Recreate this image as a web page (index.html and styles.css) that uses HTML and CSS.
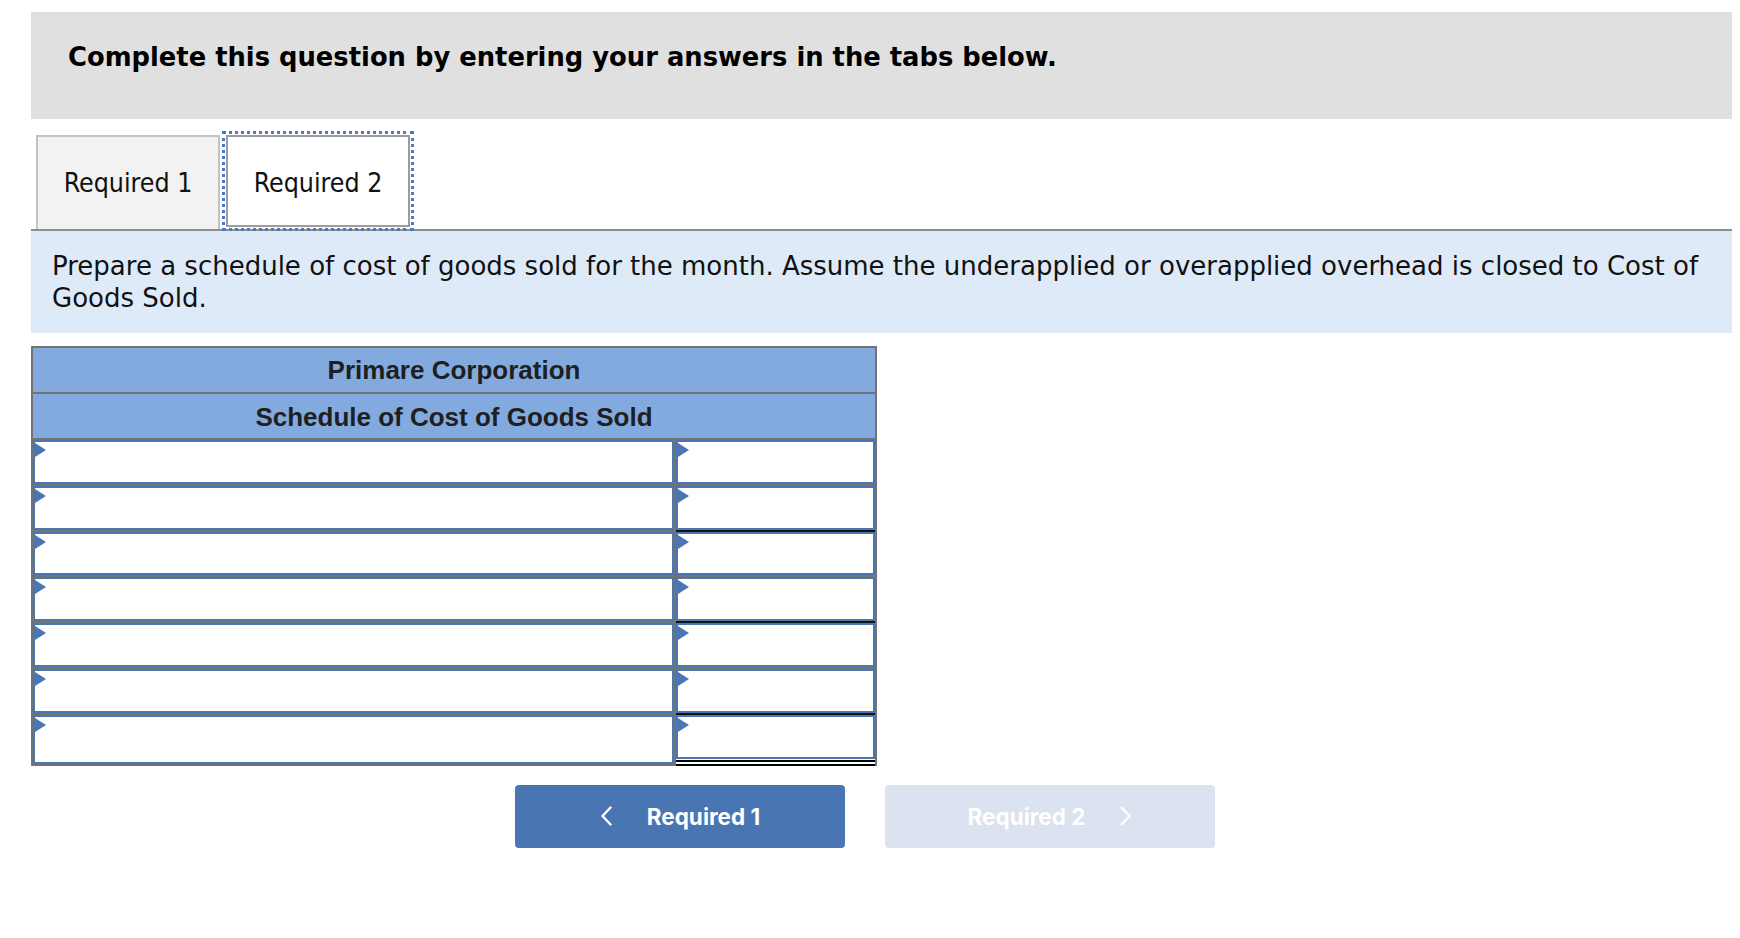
FILE: index.html
```html
<!DOCTYPE html>
<html lang="en">
<head>
<meta charset="utf-8">
<title>Required 2</title>
<link rel="stylesheet" href="styles.css">
</head>
<body>
<div class="page">
  <div class="banner">Complete this question by entering your answers in the tabs below.</div>

  <div class="tabs">
    <div class="tab">Required 1</div>
    <div class="tab active">Required 2</div>
  </div>

  <div class="panel">Prepare a schedule of cost of goods sold for the month. Assume the underapplied or overapplied overhead is closed to Cost of Goods Sold.</div>

  <div class="sheet">
    <div class="head">Primare Corporation</div>
    <div class="head">Schedule of Cost of Goods Sold</div>

    <div class="inp"></div><div class="inp"></div>
    <div class="inp"></div><div class="inp"></div>
    <div class="inp"></div><div class="inp sub"></div>
    <div class="inp"></div><div class="inp"></div>
    <div class="inp"></div><div class="inp sub"></div>
    <div class="inp"></div><div class="inp"></div>
    <div class="inp last"></div>
    <div class="total"><div class="inp sub"></div></div>
  </div>

  <div class="nav">
    <div class="btn">
      <svg class="chev" width="12" height="20" viewBox="0 0 12 20"><polyline points="10.5,1.5 2.5,10 10.5,18.5" fill="none" stroke="#ffffff" stroke-width="2.4" stroke-linecap="round" stroke-linejoin="round"/></svg>
      <span>Required 1</span>
    </div>
    <div class="btn disabled">
      <span>Required 2</span>
      <svg class="chev" width="12" height="20" viewBox="0 0 12 20"><polyline points="1.5,1.5 9.5,10 1.5,18.5" fill="none" stroke="#ffffff" stroke-width="2.4" stroke-linecap="round" stroke-linejoin="round"/></svg>
    </div>
  </div>
</div>
</body>
</html>
```

FILE: styles.css
```css
html, body {
  margin: 0;
  padding: 0;
  background: #ffffff;
}

body {
  font-family: "DejaVu Sans", Verdana, sans-serif;
  color: #000000;
}

.page {
  padding: 12px 8px 40px 31px;
}

.banner {
  box-sizing: border-box;
  height: 107px;
  background: #e0e0e0;
  padding: 30px 0 0 37px;
  font-weight: 700;
  font-size: 25.8px;
  line-height: 30px;
  color: #000000;
}

.tabs {
  display: flex;
  align-items: flex-start;
  gap: 6px;
  margin-top: 16px;
  padding-left: 5px;
  height: 94px;
  border-bottom: 2px solid #8e8e8e;
}

.tab {
  box-sizing: border-box;
  width: 184px;
  height: 94px;
  padding-top: 31px;
  text-align: center;
  background: #f2f2f2;
  border: 2px solid #c3c3c3;
  border-bottom: none;
  font-family: "DejaVu Sans Condensed", "DejaVu Sans", sans-serif;
  font-stretch: condensed;
  font-size: 26.5px;
  line-height: 30px;
  color: #111111;
}

.tab.active {
  height: 92px;
  background: #ffffff;
  border: 2px solid #9c9c9c;
  outline: 3px dotted #4a78c6;
  outline-offset: 1px;
}

.panel {
  background: #deeaf7;
  padding: 19px 21px;
  font-size: 26px;
  line-height: 32px;
  color: #111111;
}

.sheet {
  margin-top: 13px;
  width: 846px;
  box-sizing: border-box;
  display: grid;
  grid-template-columns: 641px 199px;
  grid-auto-rows: auto;
  align-items: start;
  gap: 2px;
  padding: 2px;
  background: #737373;
}

.head {
  grid-column: 1 / span 2;
  height: 44px;
  display: flex;
  align-items: center;
  justify-content: center;
  background: #82aadf;
  font-family: "Liberation Sans", Arial, sans-serif;
  font-weight: 700;
  font-size: 26px;
  color: #1f1f1f;
}

.head + .head {
  padding-top: 2px;
  box-sizing: border-box;
}

.inp {
  position: relative;
  box-sizing: border-box;
  height: 43.8px;
  background: #ffffff;
  border: 2px solid #4a76b4;
}

.inp::before {
  content: "";
  position: absolute;
  left: 0;
  top: 1px;
  width: 0;
  height: 0;
  border-left: 11px solid #4a76b4;
  border-top: 7px solid transparent;
  border-bottom: 7px solid transparent;
}

.inp.sub {
  box-shadow: 0 -2px 0 #111111;
}

.inp.last {
  height: 49px;
}

.total {
  box-sizing: border-box;
  height: 51px;
  margin-bottom: -2px;
  background: #ffffff;
  padding-bottom: 1px;
  border-bottom: 6px double #000000;
}

.total .inp {
  height: 44px;
}

.nav {
  display: flex;
  gap: 40px;
  margin-top: 19px;
  padding-left: 484px;
}

.btn {
  box-sizing: border-box;
  width: 330px;
  height: 63px;
  border-radius: 4px;
  background: #4a75b3;
  display: flex;
  align-items: center;
  justify-content: center;
  gap: 35px;
  font-family: Inter, Roboto, sans-serif;
  font-weight: 700;
  font-size: 22.5px;
  letter-spacing: 0;
  color: #ffffff;
}

.btn.disabled {
  background: #dae3ef;
}

.chev {
  display: block;
}
```
